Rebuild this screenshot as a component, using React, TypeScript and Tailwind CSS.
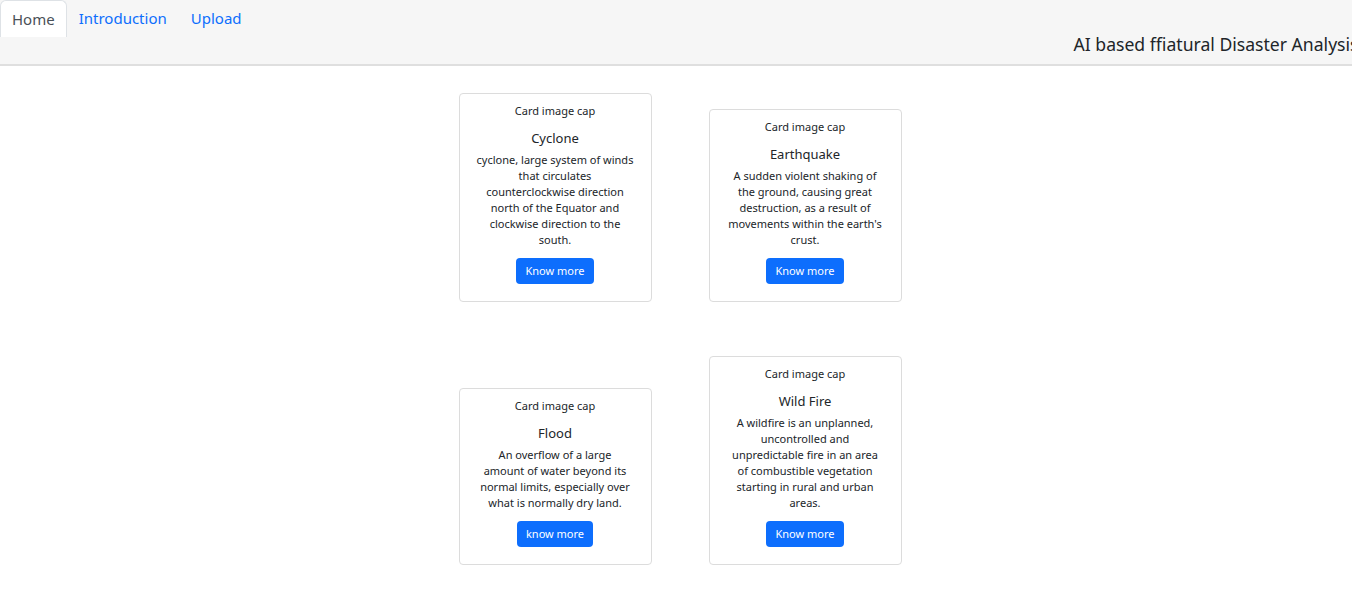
import React from "react";

type CardProps = { title: string; lines: string[]; button: string };

function Card({ title, lines, button }: CardProps) {
  return (
    <div className="w-[193px] border border-[#dcdcdc] rounded-[4px] bg-white px-3 pt-[9px] pb-[17px] flex flex-col items-center text-center text-[#212529]">
      <div className="text-[11px] leading-[16px]">Card image cap</div>
      <div className="mt-[9px] text-[13px] leading-[20px]">{title}</div>
      <div className="mt-[4px] text-[11px] leading-[16px] whitespace-nowrap">
        {lines.map((l, i) => (
          <div key={i}>{l}</div>
        ))}
      </div>
      <button className="mt-[10px] h-[26px] px-[9px] rounded-[4px] bg-[#0d6efd] text-white text-[11px] leading-[16px]">
        {button}
      </button>
    </div>
  );
}

export default function App() {
  return (
    <div
      className="w-[1352px] min-h-[605px] overflow-hidden bg-white"
      style={{ fontFamily: '"Noto Sans", "Open Sans", sans-serif' }}
    >
      <header className="h-[66px] bg-[#f6f6f6] border-b-2 border-[#dfdfdf] flex items-start">
        <nav className="flex items-start text-[15px] shrink-0">
          <div className="h-[37px] px-[11px] flex items-center bg-white border border-[#dee2e6] border-b-0 rounded-t-[6px] text-[#495057]">
            Home
          </div>
          <div className="h-[37px] px-3 flex items-center text-[#0d6efd]">Introduction</div>
          <div className="h-[37px] px-3 flex items-center text-[#0d6efd]">Upload</div>
        </nav>
        <div className="ml-[820px] mt-[31px] shrink-0 whitespace-nowrap text-[17.6px] leading-[26px] text-[#212529]">
          AI based ffiatural Disaster Analysis
        </div>
      </header>
      <main className="flex flex-col items-center pt-[27px] pl-[8px] gap-[54px]">
        <div className="flex items-end gap-[57px]">
          <Card
            title="Cyclone"
            lines={[
              "cyclone, large system of winds",
              "that circulates",
              "counterclockwise direction",
              "north of the Equator and",
              "clockwise direction to the",
              "south.",
            ]}
            button="Know more"
          />
          <Card
            title="Earthquake"
            lines={[
              "A sudden violent shaking of",
              "the ground, causing great",
              "destruction, as a result of",
              "movements within the earth's",
              "crust.",
            ]}
            button="Know more"
          />
        </div>
        <div className="flex items-end gap-[57px]">
          <Card
            title="Flood"
            lines={[
              "An overflow of a large",
              "amount of water beyond its",
              "normal limits, especially over",
              "what is normally dry land.",
            ]}
            button="know more"
          />
          <Card
            title="Wild Fire"
            lines={[
              "A wildfire is an unplanned,",
              "uncontrolled and",
              "unpredictable fire in an area",
              "of combustible vegetation",
              "starting in rural and urban",
              "areas.",
            ]}
            button="Know more"
          />
        </div>
      </main>
    </div>
  );
}
